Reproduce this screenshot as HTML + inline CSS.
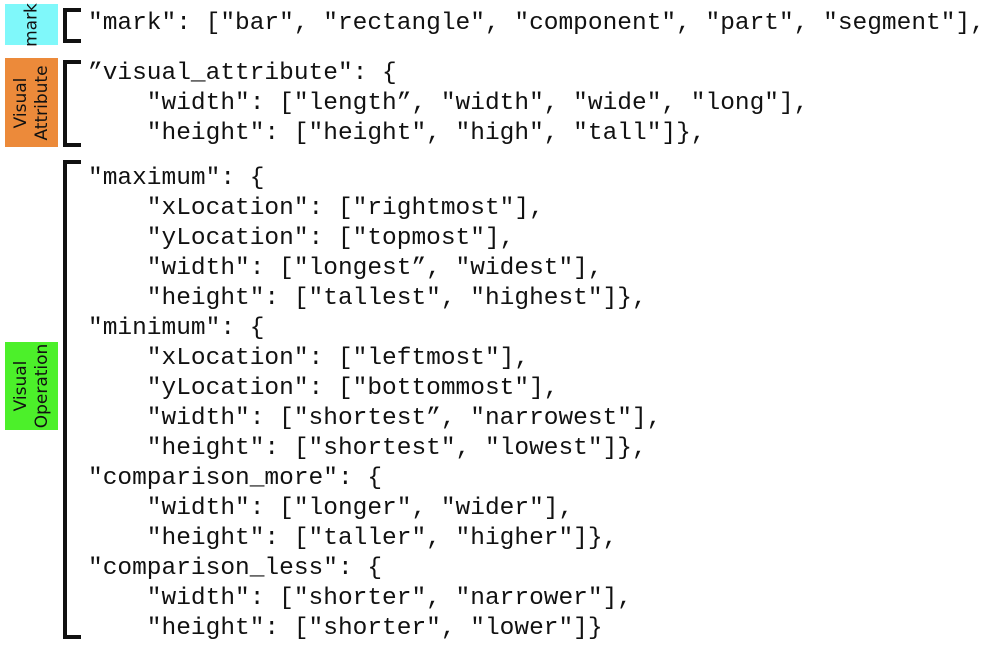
<!DOCTYPE html>
<html><head><meta charset="utf-8"><style>
body{margin:0;width:1006px;height:649px;background:#fff;position:relative;overflow:hidden}
.l{position:absolute;left:88px;font-family:"Liberation Mono",monospace;font-size:24.5px;line-height:30px;white-space:pre;color:#111}
.box{position:absolute;left:5px;width:53px}
.lab{position:absolute;left:50%;top:50%;transform:translate(-50%,-50%) rotate(-90deg);font-family:"DejaVu Sans","Liberation Sans",sans-serif;font-size:17px;line-height:21px;text-align:center;white-space:nowrap;color:#111}
.br{position:absolute;left:63px;width:14px;border:4px solid #111;border-right:none}
</style></head><body>
<div class="box" style="top:4px;height:41px;background:#7ff8fa"><div class="lab">mark</div></div>
<div class="box" style="top:58px;height:89px;background:#ec8a3a"><div class="lab">Visual<br>Attribute</div></div>
<div class="box" style="top:342px;height:88px;background:#4cf02a"><div class="lab">Visual<br>Operation</div></div>
<div class="br" style="top:8px;height:27px"></div>
<div class="br" style="top:60px;height:79px"></div>
<div class="br" style="top:160px;height:471px"></div>
<div class="l" style="top:9px">"mark": ["bar", "rectangle", "component", "part", "segment"],</div>
<div class="l" style="top:59px">”visual_attribute": {
    "width": ["length”, "width", "wide", "long"],
    "height": ["height", "high", "tall"]},</div>
<div class="l" style="top:164px">"maximum": {
    "xLocation": ["rightmost"],
    "yLocation": ["topmost"],
    "width": ["longest”, "widest"],
    "height": ["tallest", "highest"]},
"minimum": {
    "xLocation": ["leftmost"],
    "yLocation": ["bottommost"],
    "width": ["shortest”, "narrowest"],
    "height": ["shortest", "lowest"]},
"comparison_more": {
    "width": ["longer", "wider"],
    "height": ["taller", "higher"]},
"comparison_less": {
    "width": ["shorter", "narrower"],
    "height": ["shorter", "lower"]}</div>
</body></html>
